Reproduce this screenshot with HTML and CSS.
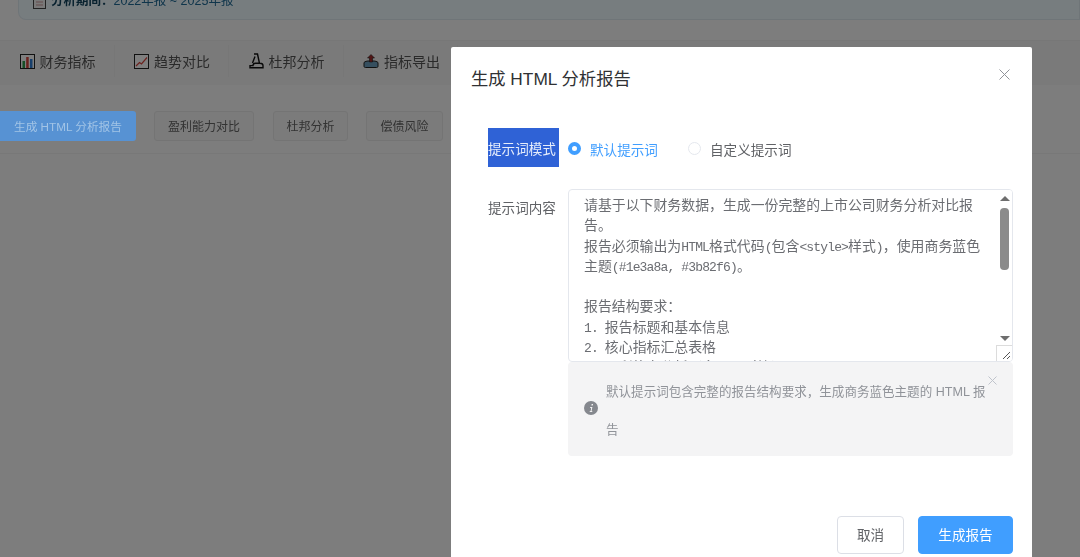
FILE: index.html
```html
<!DOCTYPE html>
<html>
	<head>
		<meta charset="utf-8">
		<title>生成 HTML 分析报告</title>
		<link rel="stylesheet" href="styles.css">
	</head>
	<body>
		<div class="page">
			<div class="period">
				<svg class="period-icon" width="13" height="14" viewBox="0 0 13 14"><rect x="0.5" y="0.5" width="12" height="13" fill="#f2f2f2" stroke="#444"/><path d="M3 10h7M3 7h7" stroke="#c99" stroke-width="1"/></svg>
				<b>分析期间：</b><span>2022年报 ~ 2025年报</span>
			</div>
			<ul class="tabs">
				<li class="tab">
					<svg width="15" height="15" viewBox="0 0 15 15"><rect x="0.5" y="0.5" width="14" height="14" fill="#fff" stroke="#222"/><rect x="2.5" y="7" width="2.5" height="7" fill="#2e9e4f"/><rect x="6.2" y="3" width="2.5" height="11" fill="#d9453d"/><rect x="10" y="5" width="2.5" height="9" fill="#2f7fd6"/></svg>
					财务指标
				</li>
				<li class="tab">
					<svg width="15" height="15" viewBox="0 0 15 15"><rect x="0.5" y="0.5" width="14" height="14" fill="#fff" stroke="#222"/><path d="M2 12l3.5-3.5 2 1.500L13 3.500" fill="none" stroke="#d9453d" stroke-width="1.2"/></svg>
					趋势对比
				</li>
				<li class="tab">
					<svg width="15" height="16" viewBox="0 0 15 16"><path d="M5 1h3.500l2 9.500M6 3.500L3.500 10M1 14.800h13v-2.200c0-1.500-1-2.300-3-2.300H6.500c-1.500 0-2.500.8-2.500 2.300H1z" fill="none" stroke="#111" stroke-width="1.4"/></svg>
					杜邦分析
				</li>
				<li class="tab">
					<svg width="16" height="14" viewBox="0 0 16 14"><path d="M1 8.500C2 7.500 4 7 5 7h6c1 0 3 .5 4 1.500v3.500c0 1-.5 1.500-1.500 1.500h-11C1.500 13.500 1 13 1 12z" fill="#6d9fbe" stroke="#222" stroke-width="1"/><path d="M8 0.500L11.500 4H9.500v4h-3V4H4.500z" fill="#a32b2b" stroke="#222" stroke-width="0.6"/></svg>
					指标导出
				</li>
			</ul>
			<div class="presets">
				<button class="preset preset-a">盈利能力对比</button>
				<button class="preset preset-b">杜邦分析</button>
				<button class="preset preset-c">偿债风险</button>
			</div>
			<div class="rule"></div>
		</div>

		<div class="overlay">
			<button class="preset-main">生成 HTML 分析报告</button>
			<div class="dialog">
				<div class="dialog-head">
					<span class="dialog-title">生成 HTML 分析报告</span>
					<svg class="dialog-close" width="11" height="11" viewBox="0 0 11 11"><path d="M.5.5l10 10M10.500.5l-10 10" stroke="#909399" stroke-width="1"/></svg>
				</div>
				<div class="dialog-body">
					<div class="row row-mode">
						<label class="row-label label-selected">提示词模式</label>
						<div class="radios">
							<span class="radio radio-on"><i class="radio-dot"></i>默认提示词</span>
							<span class="radio"><i class="radio-dot"></i>自定义提示词</span>
						</div>
					</div>
					<div class="row">
						<label class="row-label label-text">提示词内容</label>
						<div class="field">
							<div class="prompt-box">
								<div class="prompt">
									<p class="line">请基于以下财务数据，生成一份完整的上市公司财务分析对比报</p>
									<p class="line">告。</p>
									<p class="line">报告必须输出为<span class="latin">HTML</span>格式代码<span class="latin">(</span>包含<span class="latin">&lt;style&gt;</span>样式<span class="latin">)</span>，使用商务蓝色</p>
									<p class="line">主题<span class="latin">(#1e3a8a, #3b82f6)</span>。</p>
									<p class="line"></p>
									<p class="line">报告结构要求：</p>
									<p class="line"><span class="latin">1. </span>报告标题和基本信息</p>
									<p class="line"><span class="latin">2. </span>核心指标汇总表格</p>
									<p class="line"><span class="latin">3. </span>盈利能力分析（多公司对比）</p>
								</div>
								<div class="scrollbar">
									<i class="arrow arrow-up"></i>
									<i class="thumb"></i>
									<i class="arrow arrow-down"></i>
								</div>
								<div class="resizer">
									<svg width="9" height="9" viewBox="0 0 9 9"><path d="M8 1L1 8M8 5L5 8" stroke="#555" stroke-width="1"/></svg>
								</div>
							</div>
							<div class="alert">
								<svg class="alert-icon" width="14" height="14" viewBox="0 0 14 14"><circle cx="7" cy="7" r="7" fill="#85888e"/><path d="M7.700 3h1.300l-.3 1.400H7.400zM6 6h2.400l-1 4.200h1l-.2.800H5.600l.2-.8h.8l.7-3.400H6z" fill="#fff"/></svg>
								<p class="alert-text">默认提示词包含完整的报告结构要求，生成商务蓝色主题的 HTML 报告</p>
								<svg class="alert-close" width="9" height="9" viewBox="0 0 9 9"><path d="M.5.5l8 8M8.500.5l-8 8" stroke="#c0c4cc" stroke-width="1"/></svg>
							</div>
						</div>
					</div>
				</div>
				<div class="dialog-foot">
					<button class="btn">取消</button>
					<button class="btn btn-primary">生成报告</button>
				</div>
			</div>
		</div>
	</body>
</html>
```

FILE: styles.css
```css
*{
	margin:0;
	padding:0;
	box-sizing:border-box;
}
html,body{
	height:100%;
	overflow:hidden;
}
body{
	font-family:"Liberation Sans","Noto Sans CJK SC",sans-serif;
	background-color:#fafafa;
	color:#303133;
}
ul{
	list-style:none;
}
button{
	font-family:inherit;
}

/* page under the mask */
.page{
	height:557px;
	display:flex;
	flex-direction:column;
	filter:blur(.5px);
}
.period{
	height:21px;
	margin:-1px 0 0 18px;
	padding:0 0 10px 14px;
	background-color:#eefaff;
	border:1px solid #dfeaf1;
	border-top:0;
	border-radius:0 0 0 8px;
	display:flex;
	align-items:flex-end;
	font-size:12.500px;
	line-height:15px;
	color:#1e6a96;
	white-space:nowrap;
}
.period-icon{
	margin:0 5px 0 0;
	flex:none;
}
.period b{
	color:#12455f;
	font-weight:700;
}
.tabs{
	display:flex;
	height:45px;
	margin-top:20px;
	background-color:#f5f5f5;
	border-top:1px solid #eeeeee;
	padding-top:4px;
}
.tab{
	height:32px;
	width:114.500px;
	padding-left:19.600px;
	display:flex;
	align-items:center;
	gap:5px;
	font-size:14px;
	color:#555;
	border-right:1px solid #eeeeee;
	white-space:nowrap;
}
.presets{
	display:flex;
	margin-top:26px;
	height:30px;
	padding-left:154px;
}
.preset{
	height:30px;
	padding-bottom:2px;
	border:1px solid #e8e8e8;
	border-radius:3px;
	background-color:#f6f6f6;
	font-size:12px;
	color:#666;
	white-space:nowrap;
}
.preset-a{
	width:100px;
}
.preset-b{
	width:75px;
	margin-left:19px;
}
.preset-c{
	width:77px;
	margin-left:18px;
}
.rule{
	height:1px;
	margin-top:12px;
	background-color:#f0f0f0;
}

/* mask and dialog */
.overlay{
	position:fixed;
	top:0;
	left:0;
	right:0;
	bottom:0;
	background-color:rgba(0,0,0,.5);
	padding:47px 48px 0 451px;
	overflow:hidden;
}
/* this one stays bright through the mask in the shot */
.preset-main{
	position:absolute;
	top:111px;
	left:0;
	width:136px;
	height:30px;
	padding-bottom:2px;
	border:0;
	border-radius:0 3px 3px 0;
	background-color:#5792d3;
	color:#a2c4e6;
	font-size:11.700px;
	white-space:nowrap;
	filter:blur(.5px);
}
.dialog{
	width:581px;
	height:560px;
	background-color:#fff;
	border-radius:2px;
	display:flex;
	flex-direction:column;
}
.dialog-head{
	height:81px;
	padding:20px 22px 0 20px;
	display:flex;
	justify-content:space-between;
	align-items:flex-start;
}
.dialog-title{
	font-size:17.300px;
	line-height:24px;
	color:#303133;
}
.dialog-close{
	margin-top:2px;
}
.dialog-body{
	padding:0 19px 0 37px;
}
.row{
	display:flex;
	gap:9px;
	font-size:13.600px;
}
.row-mode{
	height:39px;
	margin-bottom:22px;
}
.row-label{
	width:71px;
	flex:none;
	white-space:nowrap;
	color:#606266;
	font-size:13.600px;
}
.label-selected{
	background-color:#2f62d6;
	color:#e6edfb;
	line-height:43px;
}
.label-text{
	line-height:40px;
}
.radios{
	display:flex;
	align-items:center;
	padding-top:2px;
	gap:30px;
}
.radio{
	display:flex;
	align-items:center;
	gap:9px;
	color:#606266;
}
.radio-dot{
	width:13px;
	height:13px;
	border:1px solid #e4e7ed;
	border-radius:50%;
	background-color:#fff;
}
.radio-on{
	color:#409eff;
}
.radio-on .radio-dot{
	border:4.500px solid #409eff;
}
.field{
	width:445px;
}
.prompt-box{
	position:relative;
	height:173px;
	border:1px solid #e4e7ed;
	border-radius:4px;
	overflow:hidden;
}
.prompt{
	height:100%;
	overflow:hidden;
	padding:4px 0 0 15px;
	font-family:"Noto Sans CJK SC",sans-serif;
	font-size:13.900px;
	color:#6b6d72;
}
.line{
	height:20.300px;
	line-height:20.300px;
	white-space:pre;
}
.latin{
	font-family:"Liberation Mono",monospace;
	font-size:13px;
	line-height:1;
	letter-spacing:-.85px;
}
.scrollbar{
	position:absolute;
	top:0;
	right:0;
	width:16px;
	height:160px;
	background-color:#fff;
}
.arrow{
	position:absolute;
	left:3.500px;
	width:0;
	height:0;
	border-left:5px solid transparent;
	border-right:5px solid transparent;
}
.arrow-up{
	top:6px;
	border-bottom:5px solid #6e6e6e;
}
.arrow-down{
	bottom:9px;
	border-top:5px solid #6e6e6e;
}
.thumb{
	position:absolute;
	top:18px;
	left:4px;
	width:8.500px;
	height:62px;
	border-radius:4px;
	background-color:#8b8b8b;
}
.resizer{
	position:absolute;
	right:0;
	bottom:0;
	width:16px;
	height:16px;
	background-color:#fff;
	border:1px solid #dcdcdc;
	border-right:0;
	border-bottom:0;
	display:flex;
	align-items:flex-end;
	justify-content:flex-end;
	padding:0 1px 1px 0;
}
.alert{
	position:relative;
	height:94px;
	padding:4px 22px 0 16px;
	background-color:#f4f4f5;
	border-radius:4px;
	display:flex;
	align-items:center;
	gap:8px;
}
.alert-icon{
	flex:none;
	margin-top:-6px;
}
.alert-text{
	font-size:12.550px;
	line-height:38px;
	color:#909399;
}
.alert-close{
	position:absolute;
	top:14px;
	right:16px;
}
.dialog-foot{
	display:flex;
	justify-content:flex-end;
	gap:14px;
	padding:60px 19px 0 0;
}
.btn{
	height:38px;
	width:67px;
	padding-bottom:3px;
	border:1px solid #dcdfe6;
	border-radius:4px;
	background-color:#fff;
	font-size:13.600px;
	color:#606266;
}
.btn-primary{
	width:95px;
	background-color:#409eff;
	border-color:#409eff;
	color:#fff;
}
```
